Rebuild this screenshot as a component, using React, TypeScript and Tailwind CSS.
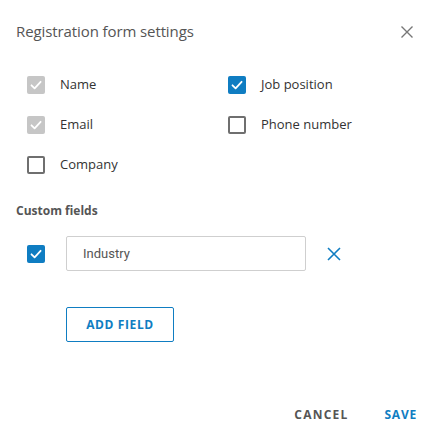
import React from 'react';

const BLUE = '#0f7dc2';

const CheckIcon = () => (
  <svg viewBox="0 0 18 18" className="w-[18px] h-[18px]">
    <path d="M4.5 9.3 L7.6 12.3 L13.6 5.8" fill="none" stroke="white" strokeWidth="1.8" strokeLinecap="round" strokeLinejoin="round" />
  </svg>
);

interface BoxProps {
  state: 'disabled' | 'checked' | 'empty';
}

const Box: React.FC<BoxProps> = ({ state }) => {
  if (state === 'disabled') {
    return (
      <div className="w-[18px] h-[18px] rounded-[2px] bg-[#c6c6c6] flex-shrink-0">
        <CheckIcon />
      </div>
    );
  }
  if (state === 'checked') {
    return (
      <div className="w-[18px] h-[18px] rounded-[2px] bg-[#0f7dc2] flex-shrink-0">
        <CheckIcon />
      </div>
    );
  }
  return <div className="w-[18px] h-[18px] rounded-[2px] border-2 border-[#6f6f6f] flex-shrink-0" />;
};

const Option: React.FC<{ label: string; state: BoxProps['state'] }> = ({ label, state }) => (
  <div className="flex items-center h-[18px]">
    <Box state={state} />
    <span className="ml-[15px] text-[13px] text-[#333]">{label}</span>
  </div>
);

const App: React.FC = () => {
  return (
    <div className="w-[440px] h-[439px] bg-white flex flex-col" style={{ fontFamily: '"Open Sans", sans-serif' }}>
      {/* Header */}
      <div className="h-[64px] flex items-center justify-between pl-4 pr-[26px]">
        <h2 className="text-[15px] text-[#555] tracking-[-0.1px] mt-[-2px]">Registration form settings</h2>
        <svg viewBox="0 0 14 14" className="w-[14px] h-[14px]">
          <path d="M1.5 1.5 L12.5 12.5 M12.5 1.5 L1.5 12.5" stroke="#777" strokeWidth="1.4" />
        </svg>
      </div>

      {/* Standard fields */}
      <div className="mt-3 pl-[27px] grid grid-cols-[201px_1fr] gap-y-[22px]">
        <Option label="Name" state="disabled" />
        <Option label="Job position" state="checked" />
        <Option label="Email" state="disabled" />
        <Option label="Phone number" state="empty" />
        <Option label="Company" state="empty" />
      </div>

      <div className="mt-[29px] pl-4 text-[12px] font-bold text-[#555] leading-4">Custom fields</div>

      {/* Custom field row */}
      <div className="mt-[17px] pl-[27px] flex items-center">
        <Box state="checked" />
        <div className="ml-[21px] w-[240px] h-[35px] border border-[#cfcfcf] rounded-[2px] flex items-center pl-4">
          <span className="text-[13px] text-[#555]" style={{ fontFamily: 'Roboto, sans-serif' }}>Industry</span>
        </div>
        <svg viewBox="0 0 14 14" className="ml-[21px] w-[14px] h-[14px]">
          <path d="M1 1 L13 13 M13 1 L1 13" stroke={BLUE} strokeWidth="1.6" />
        </svg>
      </div>

      <div className="mt-[36px] pl-[66px]">
        <button className="w-[108px] h-[35px] border border-[#0f7dc2] rounded-[2px] text-[12px] font-bold text-[#0f7dc2] tracking-[0.6px]">
          ADD FIELD
        </button>
      </div>

      {/* Footer */}
      <div className="mt-auto h-[48px] flex items-center justify-end pr-[23px] gap-[36px]">
        <button className="text-[12px] font-bold text-[#555] tracking-[1.2px] leading-4">CANCEL</button>
        <button className="text-[12px] font-bold text-[#0f7dc2] tracking-[0.8px] leading-4">SAVE</button>
      </div>
    </div>
  );
};

export default App;
